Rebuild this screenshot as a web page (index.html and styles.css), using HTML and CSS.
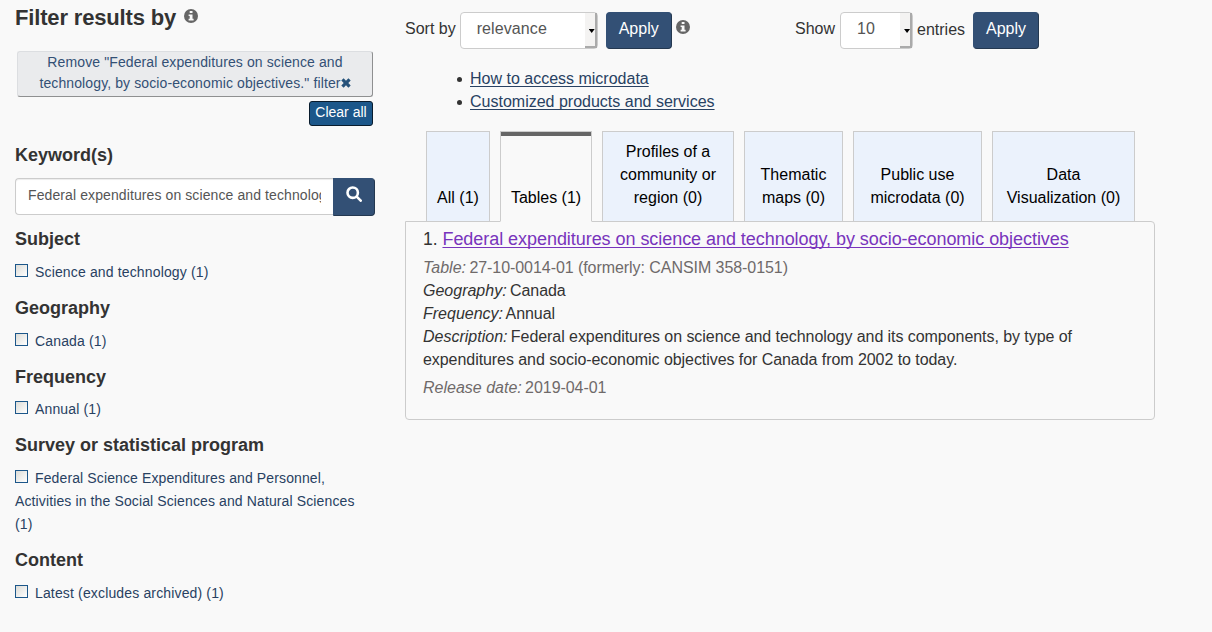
FILE: index.html
```html
<!DOCTYPE html>
<html lang="en">
<head>
<meta charset="utf-8">
<title>Search results</title>
<link rel="stylesheet" href="styles.css">
</head>
<body>
<div class="page">
<aside class="sidebar">
  <h2 class="title"><span>Filter results by</span> <svg class="info" viewBox="0 0 14 14"><circle cx="7" cy="7" r="7"/><path d="M5.7 2h2.8v2H5.7zM4.6 5.4h3.9v4.3h1.1v1.7H4.6V9.7h1.1V7.1H4.6z"/></svg></h2>
  <button class="remove">Remove "Federal expenditures on science and<br>technology, by socio-economic objectives." filter<svg class="cross" viewBox="0 0 10 10"><path d="M2.6.3 5 2.7 7.4.3l2.3 2.3L7.3 5l2.4 2.4-2.3 2.3L5 7.3 2.6 9.7.3 7.4 2.7 5 .3 2.6z"/></svg></button>
  <button class="clear">Clear all</button>
  <h3 class="heading">Keyword(s)</h3>
  <div class="search">
    <input class="field" type="text" value="Federal expenditures on science and technology, by socio-economic objectives">
    <button class="go"><svg viewBox="0 0 16 16"><circle cx="6.7" cy="6.7" r="5.2"/><path d="m10.7 10.7 4 4"/></svg></button>
  </div>
  <h3 class="heading">Subject</h3>
  <p class="facet"><i class="box"></i>Science and technology (1)</p>
  <h3 class="heading">Geography</h3>
  <p class="facet"><i class="box"></i>Canada (1)</p>
  <h3 class="heading frequency">Frequency</h3>
  <p class="facet"><i class="box"></i>Annual (1)</p>
  <h3 class="heading">Survey or statistical program</h3>
  <p class="facet survey"><i class="box"></i>Federal Science Expenditures and Personnel,<br>Activities in the Social Sciences and Natural Sciences<br>(1)</p>
  <h3 class="heading">Content</h3>
  <p class="facet"><i class="box"></i>Latest (excludes archived) (1)</p>
</aside>
<main class="main">
  <div class="controls">
    <div class="control">
      <span>Sort by</span>
      <div class="select sort"><span>relevance</span><i class="arrow"></i></div>
      <button class="apply">Apply</button>
      <svg class="info" viewBox="0 0 14 14"><circle cx="7" cy="7" r="7"/><path d="M5.7 2h2.8v2H5.7zM4.6 5.4h3.9v4.3h1.1v1.7H4.6V9.7h1.1V7.1H4.6z"/></svg>
    </div>
    <div class="control show">
      <span>Show</span>
      <div class="select count"><span>10</span><i class="arrow"></i></div>
      <span class="entries">entries</span>
      <button class="apply">Apply</button>
    </div>
  </div>
  <ul class="links">
    <li><a href="#">How to access microdata</a></li>
    <li><a href="#">Customized products and services</a></li>
  </ul>
  <div class="tabs">
    <div class="tab all">All (1)</div>
    <div class="tab tables active">Tables (1)</div>
    <div class="tab profiles"><span>Profiles of a</span><span>community or</span><span>region (0)</span></div>
    <div class="tab maps"><span>Thematic</span><span>maps (0)</span></div>
    <div class="tab public"><span>Public use</span><span>microdata (0)</span></div>
    <div class="tab data"><span>Data</span><span>Visualization (0)</span></div>
  </div>
  <section class="panel">
    <div class="result-title">1. <a href="#">Federal expenditures on science and technology, by socio-economic objectives</a></div>
    <p class="meta muted"><em>Table:</em> 27-10-0014-01 (formerly: CANSIM 358-0151)</p>
    <p class="meta"><em>Geography:</em> Canada</p>
    <p class="meta"><em>Frequency:</em> Annual</p>
    <p class="meta"><em>Description:</em> Federal expenditures on science and technology and its components, by type of<br>expenditures and socio-economic objectives for Canada from 2002 to today.</p>
    <p class="meta muted release"><em>Release date:</em> 2019-04-01</p>
  </section>
</main>
</div>
</body>
</html>
```
FILE: styles.css
```css
* { box-sizing: border-box; }
body { margin: 0; background: #f9f9f9; color: #333; font: 16px/23px "Liberation Sans", Arial, sans-serif; }
h2, h3, p, ul { margin: 0; padding: 0; }
button { font: inherit; padding: 0; }
.page { display: flex; gap: 30px; width: 1155px; height: 632px; padding-left: 15px; }
.sidebar { width: 360px; font-size: 14px; display: flex; flex-direction: column; }
.main { width: 750px; }
.title { font-size: 22px; line-height: 24px; margin-top: 6px; height: 45px; letter-spacing: -.16px; }
.info { width: 14px; height: 14px; fill: #666; }
.info path { fill: #f9f9f9; }
.title .info { margin-left: 2px; vertical-align: 2px; }
.remove { width: 356px; height: 46px; margin-left: 2px; padding-bottom: 2px; border: 1px solid #dcdee1; border-right-color: #8f9091; border-bottom-color: #8f9091; border-radius: 3px; background: #eaebed; color: #335075; line-height: 21px; letter-spacing: .11px; }
.cross { width: 10px; height: 10px; fill: #26527a; }
.clear { width: 64px; height: 25px; margin: 4px 2px 0 0; padding-bottom: 2px; align-self: flex-end; border: 1px solid #091c2d; border-radius: 3px; background: #1c578a; color: #fff; line-height: 21px; }
.heading { font-size: 18px; line-height: 20px; margin: 14px 0 12px; }
.clear + .heading { margin: 19px 0 13px; }
.frequency { margin-bottom: 11px; }
.search { display: flex; height: 38px; }
.field { width: 318px; height: 37px; border: 1px solid #ccc; border-right: 0; border-radius: 4px 0 0 4px; background: #fff; box-shadow: inset 0 1px 1px rgba(0,0,0,.075); padding: 4px 12px 8px; color: #555; font: inherit; letter-spacing: .1px; }
.go { width: 42px; border: 1px solid #335075; border-bottom-color: #243850; border-right-color: #243850; border-radius: 0 4px 4px 0; background: #335075; }
.go svg { width: 16px; height: 16px; fill: none; stroke: #fff; stroke-width: 2.6; stroke-linecap: round; }
.search + .heading { margin-top: 13px; }
.facet { color: #284162; letter-spacing: .15px; }
.survey { letter-spacing: .12px; }
.box { display: inline-block; width: 13px; height: 13px; margin-right: 7px; border: 1px solid #1c578a; background: linear-gradient(135deg, #dcdcd7, #fff); vertical-align: 0; }
.controls { display: flex; margin-top: 12px; }
.control { display: flex; width: 390px; line-height: 34px; }
.show { width: 340px; }
.select { display: flex; justify-content: space-between; height: 37px; margin-left: 4px; padding-left: 16px; border: 1px solid #ccc; border-radius: 4px; background: #fff; color: #555; line-height: 32px; letter-spacing: .1px; }
.sort { width: 138px; }
.count { width: 73px; margin-left: 5px; }
.arrow { width: 12px; height: 35px; border-right: 2px solid #aaa; border-bottom: 2px solid #aaa; background: #f4f3f2; padding: 16px 0 0 4px; }
.arrow::before { content: ""; display: block; width: 6px; height: 4px; background: #000; clip-path: polygon(0 0, 100% 0, 50% 100%); }
.entries { margin-left: 4px; line-height: 36px; }
.apply { width: 66px; height: 37px; margin-left: 8px; padding-bottom: 4px; border: 1px solid #335075; border-right-color: #243850; border-bottom-color: #243850; border-radius: 4px; background: #335075; color: #fff; line-height: 32px; }
.control > .info { margin: 8px 0 0 4px; }
.links { margin: 18px 0; padding-left: 52px; list-style: none; }
.links li { display: flex; align-items: center; gap: 8px; }
.links li::before { content: ""; width: 5px; height: 5px; margin-top: 2px; border-radius: 50%; background: #333; }
.links a { color: #284162; text-decoration: underline; text-underline-offset: 2px; text-decoration-thickness: 1px; text-decoration-skip-ink: none; }
.tabs { display: flex; gap: 10px; padding-left: 21px; height: 91px; margin-bottom: -1px; position: relative; }
.tab { display: flex; flex-direction: column; justify-content: flex-end; height: 91px; padding-bottom: 12px; border: 1px solid #ccc; background: #ebf2fc; color: #000; text-align: center; }
.all { width: 64px; }
.tables { width: 92px; }
.profiles { width: 132px; }
.maps { width: 99px; }
.public { width: 129px; }
.data { width: 143px; }
.active { border-bottom-color: #f9f9f9; background: #f9f9f9; box-shadow: inset 0 4px #666; }
.panel { height: 199px; border: 1px solid #ccc; border-radius: 0 4px 4px 4px; padding: 5px 17px; }
.result-title { line-height: 24px; margin-bottom: 5px; font-size: 17.5px; }
.result-title a { font-size: 18px; letter-spacing: -.05px; color: #7834bc; text-decoration: underline; text-underline-offset: 2px; text-decoration-thickness: 1px; text-decoration-skip-ink: none; }
.meta { letter-spacing: -.06px; }
.meta em { letter-spacing: 0; margin-right: -1px; }
.muted { color: #6f6a6a; }
.release { margin-top: 5px; }
```
